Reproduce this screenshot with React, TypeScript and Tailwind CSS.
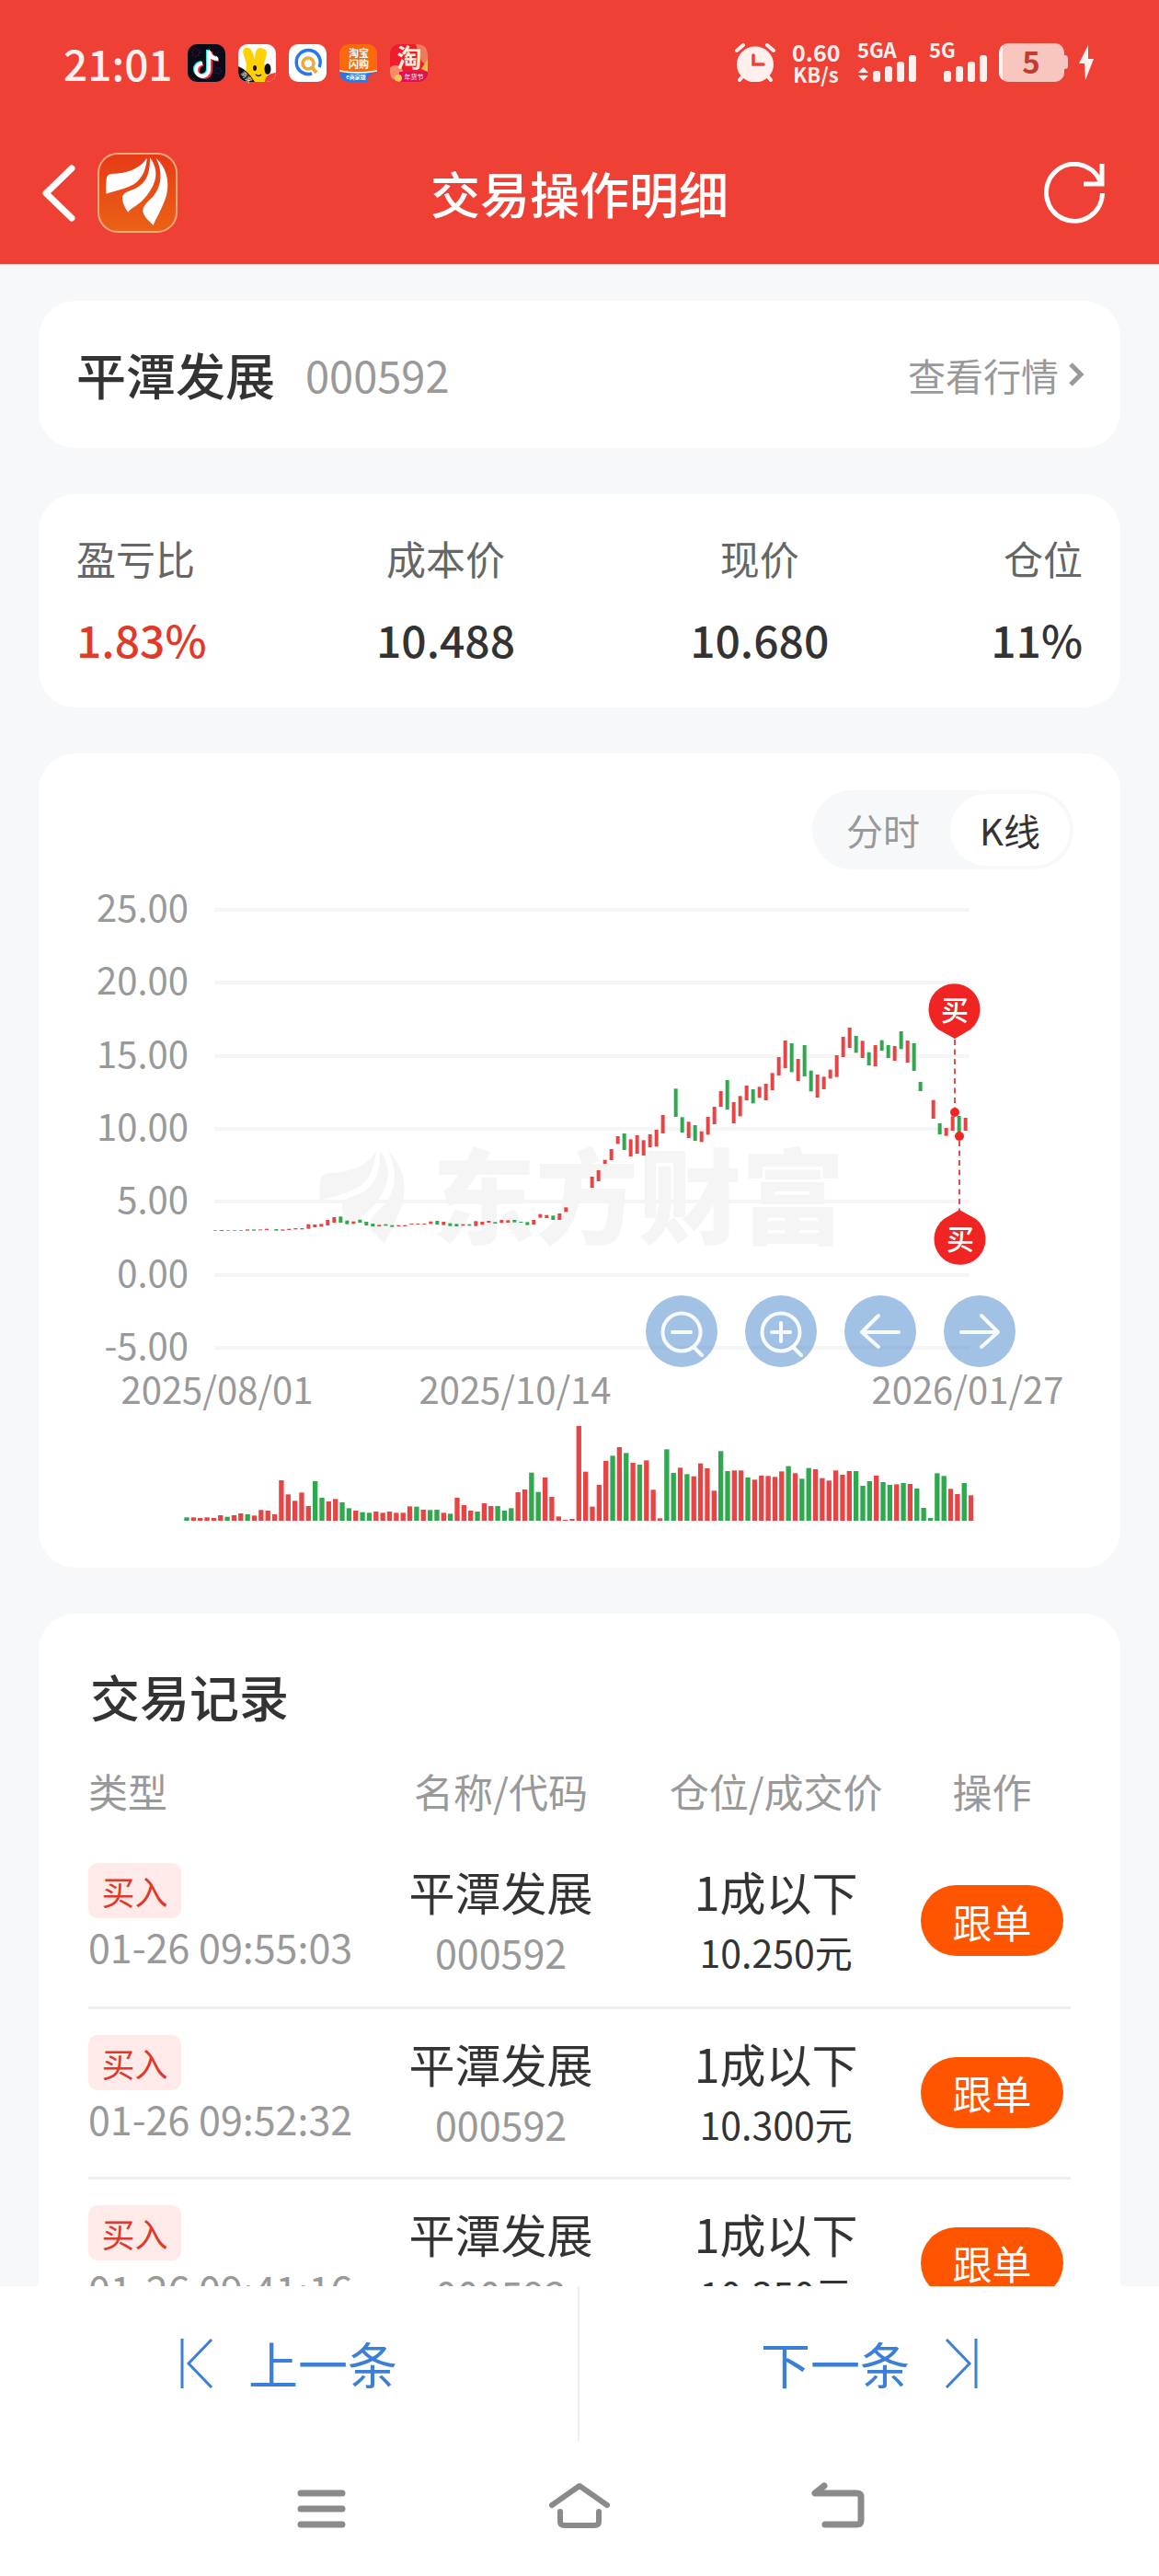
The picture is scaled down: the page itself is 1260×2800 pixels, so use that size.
import { useState } from "react";

const UP = "#e64545";
const DOWN = "#2fa84f";

const Y_TICKS = ["25.00", "20.00", "15.00", "10.00", "5.00", "0.00", "-5.00"];
const X_TICKS = [
  { x: 236, label: "2025/08/01" },
  { x: 560, label: "2025/10/14" },
  { x: 1052, label: "2026/01/27" },
];

type Candle = [x: number, top: number, bottom: number, color: "r" | "g"];

// Sub-pixel units: three units per drawing pixel.
const EARLY_CANDLES: Candle[] = [
  [102, 771, 773, "g"], [123, 771, 774, "r"], [144, 771, 773, "r"], [165, 771, 773, "r"], [186, 771, 773, "r"],
  [207, 769, 773, "r"], [228, 769, 773, "g"], [249, 769, 772, "r"], [270, 767, 771, "r"], [301, 768, 773, "g"],
  [322, 769, 773, "r"], [343, 767, 771, "r"], [364, 765, 769, "r"], [385, 765, 769, "r"], [406, 752, 767, "r"],
  [427, 753, 762, "r"], [448, 751, 760, "r"], [469, 738, 756, "r"], [490, 729, 747, "r"], [511, 727, 747, "g"],
  [532, 740, 752, "g"], [553, 743, 751, "r"], [574, 737, 747, "g"], [595, 744, 756, "g"], [616, 750, 759, "g"],
  [637, 754, 759, "r"], [658, 752, 757, "g"], [679, 755, 761, "g"], [700, 755, 759, "r"], [721, 755, 759, "r"],
  [742, 750, 753, "r"], [763, 750, 753, "r"], [784, 750, 753, "r"], [805, 743, 751, "r"], [826, 741, 753, "g"],
  [847, 744, 755, "r"], [868, 749, 758, "g"], [889, 751, 759, "g"], [910, 752, 757, "r"], [931, 752, 757, "g"],
  [952, 742, 758, "r"], [973, 744, 754, "r"], [994, 741, 747, "r"], [1015, 745, 750, "g"], [1036, 738, 748, "r"],
  [1057, 739, 747, "r"], [1078, 738, 746, "g"], [1099, 744, 747, "g"], [1120, 745, 755, "g"], [1141, 738, 753, "r"],
  [1162, 719, 731, "r"], [1183, 722, 732, "r"], [1204, 724, 738, "g"], [1225, 717, 738, "r"], [1246, 697, 712, "r"],
];

const LATE_CANDLES: Candle[] = [
  [71, 687, 723, "r"], [92, 666, 702, "r"], [113, 632, 645, "r"], [134, 597, 633, "r"], [155, 555, 580, "r"],
  [176, 546, 600, "g"], [197, 565, 621, "r"], [218, 552, 612, "r"], [239, 568, 618, "r"], [260, 549, 591, "r"],
  [281, 534, 589, "r"], [302, 486, 546, "r"], [344, 400, 492, "g"], [365, 493, 543, "g"], [386, 508, 561, "r"],
  [407, 519, 570, "g"], [428, 539, 574, "r"], [449, 492, 550, "r"], [470, 459, 516, "r"], [491, 408, 459, "r"],
  [512, 372, 468, "g"], [533, 444, 513, "r"], [554, 424, 490, "r"], [575, 390, 438, "r"], [596, 402, 448, "g"],
  [617, 394, 430, "r"], [638, 384, 438, "r"], [659, 349, 405, "r"], [680, 297, 357, "r"], [701, 243, 333, "r"],
  [722, 252, 346, "g"], [743, 303, 375, "r"], [764, 258, 360, "g"], [785, 341, 409, "g"], [806, 354, 429, "r"],
  [827, 361, 402, "r"], [848, 338, 367, "r"], [869, 291, 362, "r"], [890, 231, 297, "r"], [911, 201, 267, "r"],
  [932, 228, 283, "g"], [953, 244, 300, "r"], [974, 281, 324, "g"], [995, 258, 327, "r"], [1016, 242, 276, "g"],
  [1037, 258, 300, "g"], [1058, 261, 309, "r"], [1079, 213, 271, "g"], [1100, 243, 315, "r"], [1121, 252, 342, "g"],
  [1142, 378, 408, "g"], [1184, 437, 498, "r"], [1205, 513, 549, "g"], [1226, 528, 554, "r"], [1247, 490, 537, "r"],
  [1268, 489, 542, "g"], [1289, 495, 537, "r"],
];

const VOLUME =
  "388g 388r 390r 388r 390r 381r 386g 381r 375r 378g 382r 364r 366r 378r 267r 313r 334r 307r 351r 270g 324g 336r 328r 339g 358g 366r 371g 373g 369r 373r 369r 373r 373r 352r 353g 363r 364g 363g 373r 376g 324r 348r 366r 369g 342r 351r 351g 366g 358g 306r 297r 242g 305g 258r 321r 385r 396r 393r 90r 239r 353r 282r 204r 187g 159r 178g 210r 216g 202r 298r 391r 166g 243g 226r 247g 254r 212r 228r 301r 172g 237g 235r 235r 258g 265r 252r 253r 256r 238r 221g 244r 262g 227g 231r 260r 268r 235r 249r 237r 237g 285g 270g 252r 273g 282g 280r 276g 279r 294g 357g 390g 244g 253g 295r 312r 276g 316r"
    .split(" ")
    .map((bar) => ({ top: parseInt(bar, 10), color: bar.endsWith("r") ? UP : DOWN }));

const RECORDS = [
  { time: "01-26 09:55:03", name: "平潭发展", code: "000592", size: "1成以下", price: "10.250元" },
  { time: "01-26 09:52:32", name: "平潭发展", code: "000592", size: "1成以下", price: "10.300元" },
  { time: "01-26 09:41:16", name: "平潭发展", code: "000592", size: "1成以下", price: "10.350元" },
];

function Feathers() {
  return (
    <>
      <path d="M53.800 5.700 C46 18 32 22 16 23 C11 23.500 10 25 9.500 31 C9 36 9 40 9.600 44.700 C16 42 30 40 40 34 C50 27 53 16 53.800 5.700 Z" />
      <path d="M57 5 C57 22 54 33 40 39.500 C30 43 26.500 45 27 50 C27.500 56 30 60 33.300 64.700 C36 60 46 57 54 46 C66 30 66 18 57 5 Z" />
      <path d="M63.500 5.700 C72 22 69 38 60 48 C53 55 49 58 49.400 64 C50 69 55 73 60.700 79 C63 72 71 60 75 46 C79 30 74 15 63.500 5.700 Z" />
    </>
  );
}

function StatusBar() {
  return (
    <div className="flex h-[136px] items-center justify-between pr-[70px] pl-[69px] text-[#fff0ee]">
      <div className="flex items-center gap-[14px]">
        <span className="w-[121px] text-[46px] leading-[60px] font-medium">21:01</span>
        <svg className="size-[41px]" viewBox="0 0 41 41" aria-label="抖音">
          <rect width="41" height="41" rx="10" fill="#0b0b18" />
          <circle cx="9" cy="9" r="4" fill="none" stroke="#5a1230" strokeWidth="2" strokeDasharray="1 2" />
          <circle cx="33" cy="29" r="3" fill="none" stroke="#26265e" strokeWidth="2" strokeDasharray="1 2" />
          <g fill="none" strokeWidth="4">
            <path d="M22 6 V27 A7 7 0 1 1 15 20 M22 7 Q24 15 32 15" stroke="#25f4ee" />
            <path d="M25 8 V29 A7 7 0 1 1 17 22 M25 9 Q27 17 34 17" stroke="#fe2c55" />
            <path d="M23 7 V28 A7 7 0 1 1 16 21 M23 8 Q25 16 33 16" stroke="#fff" />
          </g>
        </svg>
        <svg className="size-[41px] overflow-visible" viewBox="0 0 41 41" aria-label="美团商家">
          <clipPath id="rabbit">
            <rect width="41" height="41" rx="10" />
          </clipPath>
          <g clipPath="url(#rabbit)">
            <rect width="41" height="41" fill="#fff" />
            <path d="M5 8 Q6 3 11 4 Q16 6 18 17 Q18 4 24 4 Q31 5 31 10 L28 21 Q34 32 30 41 H12 Q7 32 9 22 Z" fill="#ffd100" />
            <ellipse cx="18" cy="26" rx="2" ry="3" fill="#111" />
            <ellipse cx="32" cy="27" rx="3.500" ry="6" fill="#111" />
            <path d="M19 33 Q22 36 25 33" fill="none" stroke="#111" strokeWidth="1.500" />
            <path d="M0 24 Q10 28 18 41 H0 Z" fill="#111" />
            <path d="M41 31 Q29 32 29 41 H41 Z" fill="#ef4035" />
          </g>
          <text x="2" y="33" fontSize="7" fill="#fff" transform="rotate(48 3 33)">商家</text>
        </svg>
        <svg className="size-[41px]" viewBox="0 0 41 41" fill="none" aria-label="搜索">
          <rect width="41" height="41" rx="10" fill="#fff" />
          <path d="M33 25 A13 13 0 1 0 25 32" stroke="#2878ea" strokeWidth="3.500" />
          <circle cx="21" cy="21" r="6" stroke="#eda93a" strokeWidth="3.500" />
          <path d="M25 25 L30 31" stroke="#eda93a" strokeWidth="4" />
        </svg>
        <svg className="size-[41px] overflow-visible" viewBox="0 0 41 41" aria-label="淘宝闪购">
          <clipPath id="flash">
            <rect width="41" height="41" rx="10" />
          </clipPath>
          <g clipPath="url(#flash)">
            <rect width="41" height="41" fill="#fa6a0a" />
            <path d="M0 30 Q20 34 41 30 V41 H0 Z" fill="#2776ea" />
            <path d="M0 29 Q20 33 41 29" fill="none" stroke="#fff" strokeWidth="1.500" />
            <path d="M41 31 Q30 32 30 41 H41 Z" fill="#ef4035" />
          </g>
          <g fill="#fff" fontWeight="700" textAnchor="middle">
            <text x="21" y="14" fontSize="11">淘宝</text>
            <text x="21" y="26" fontSize="11">闪购</text>
            <text x="18" y="38" fontSize="6">e商家版</text>
          </g>
        </svg>
        <svg className="size-[41px] overflow-visible" viewBox="0 0 41 41" aria-label="淘宝">
          <clipPath id="taobao">
            <rect width="41" height="41" rx="10" />
          </clipPath>
          <g clipPath="url(#taobao)">
            <rect width="41" height="41" fill="#ee1c2c" />
            <path d="M28 0 L41 0 V26 L34 18 Z" fill="#f0785c" />
            <circle cx="6" cy="31" r="8" fill="#f58c68" />
            <path d="M34 27 L41 16 V30 Z" fill="#f7b64e" />
            <rect x="10" y="30" width="31" height="11" fill="#e01050" />
            <circle cx="9" cy="37" r="4" fill="#f7c64e" />
          </g>
          <text x="21" y="25" fontSize="27" fontWeight="700" fill="#fff0d8" textAnchor="middle">淘</text>
          <text x="26" y="38" fontSize="7" fill="#fff" textAnchor="middle">年货节</text>
        </svg>
      </div>
      <div className="flex items-center">
        <svg className="mr-[18px] h-[42px] w-[44px]" viewBox="0 0 44 42" aria-label="闹钟">
          <g stroke="currentColor" strokeWidth="4" strokeLinecap="round">
            <path d="M2 8 L9 2 M35 2 L42 8 M10 34 L5 40 M34 34 L39 40" />
          </g>
          <ellipse cx="22" cy="23" rx="20" ry="19.500" fill="currentColor" />
          <path d="M20 13 V23 H31" fill="none" stroke="#ee4035" strokeWidth="3.500" strokeLinecap="round" />
        </svg>
        <div className="mr-[19px] w-[52px] text-center text-[25px] leading-[24px] font-bold whitespace-nowrap">
          <div>0.60</div>
          <div className="text-[22px]">KB/s</div>
        </div>
        <svg className="mr-[14px] h-[42px] w-[64px] overflow-visible" viewBox="0 0 64 42" fill="currentColor" aria-label="5GA 信号">
          <text x="0" y="16" fontSize="22" fontWeight="700">5GA</text>
          <path d="M1 32 L6.500 26 L12 32 Z M1 35 L6.500 41 L12 35 Z" />
          <rect x="17" y="30" width="8" height="12" rx="3" />
          <rect x="30" y="25" width="8" height="17" rx="3" />
          <rect x="43" y="20" width="8" height="22" rx="3" />
          <rect x="56" y="13" width="8" height="29" rx="3" />
        </svg>
        <svg className="mr-[13px] h-[42px] w-[63px] overflow-visible" viewBox="0 0 63 42" fill="currentColor" aria-label="5G 信号">
          <text x="0" y="16" fontSize="22" fontWeight="700">5G</text>
          <rect x="16" y="30" width="8" height="12" rx="3" />
          <rect x="29" y="25" width="8" height="17" rx="3" />
          <rect x="42" y="20" width="8" height="22" rx="3" />
          <rect x="55" y="13" width="8" height="29" rx="3" />
        </svg>
        <svg className="mr-[11px] h-[42px] w-[75px] overflow-visible" viewBox="0 0 75 42" aria-label="电量 5">
          <clipPath id="cell">
            <rect width="71" height="42" rx="10" />
          </clipPath>
          <path d="M70 13 H72 Q75 13 75 17 V25 Q75 28 72 28 H70 Z" fill="#f9c5bf" />
          <g clipPath="url(#cell)">
            <rect width="71" height="42" fill="#f9c5bf" />
            <rect width="4" height="42" fill="#fff0ee" />
          </g>
          <text x="35" y="33" fontSize="33" fontWeight="700" fill="#c23a30" textAnchor="middle">5</text>
        </svg>
        <svg className="h-[38px] w-[18px]" viewBox="0 0 18 38" fill="currentColor" aria-label="充电中">
          <path d="M11 0 L1 20 H7 L8 38 L17 15 H11 Z" />
        </svg>
      </div>
    </div>
  );
}

function Header() {
  return (
    <header className="shrink-0 bg-[#ee4035] text-white">
      <StatusBar />
      <div className="grid h-[151px] grid-cols-[1fr_auto_1fr] items-center px-[45px] pb-1">
        <div className="flex items-center gap-[24px]">
          <button type="button" aria-label="返回">
            <svg className="h-[62px] w-[37px]" viewBox="0 0 37 62" fill="none" stroke="currentColor" strokeWidth="7" strokeLinecap="round" strokeLinejoin="round">
              <path d="M33 4 L5 31 L33 58" />
            </svg>
          </button>
          <svg className="size-[87px]" viewBox="0 0 87 87" aria-label="东方财富">
            <defs>
              <linearGradient id="logo-bg" x1="0" y1="0" x2="0" y2="1">
                <stop offset="0" stopColor="#e63a16" />
                <stop offset="1" stopColor="#ea6316" />
              </linearGradient>
            </defs>
            <rect x="1" y="1" width="85" height="85" rx="21" fill="url(#logo-bg)" stroke="#f8a97c" strokeWidth="2" />
            <g fill="#fff">
              <Feathers />
            </g>
          </svg>
        </div>
        <h1 className="text-[54px] leading-[64px] font-medium">交易操作明细</h1>
        <button type="button" aria-label="刷新" className="mr-[13px] justify-self-end">
          <svg className="h-[68px] w-[67px]" viewBox="0 0 67 68" fill="none" stroke="currentColor" strokeWidth="5">
            <path d="M63.500 34 A30.500 31 0 1 1 61 21" />
            <path d="M43 24 H63 V2" strokeWidth="5" />
          </svg>
        </button>
      </div>
    </header>
  );
}

function Stat({ label, value, className = "" }: { label: string; value: string; className?: string }) {
  return (
    <div className={className}>
      <dt className="text-[43px] leading-[60px] text-[#666]">{label}</dt>
      <dd className="mt-[28px] text-[48px] leading-[60px] font-medium">{value}</dd>
    </div>
  );
}

function Candles({ items }: { items: Candle[] }) {
  return items.map(([x, top, bottom, color]) => (
    <rect key={x} x={x - 6} y={top} width="12" height={bottom - top} fill={color === "r" ? UP : DOWN} />
  ));
}

function Chart() {
  return (
    <svg className="block h-auto w-full" viewBox="42 945 1176 759" role="img" aria-label="平潭发展K线图">
      <g fill="#f5f5f5">
        <g transform="translate(335 1244) scale(1.37)">
          <Feathers />
        </g>
        <text x="470" y="1344" fontSize="112" fontWeight="900">东方财富</text>
      </g>
      {Y_TICKS.map((label, i) => {
        const y = Math.round(989 + (i * 476) / 6);
        return (
          <g key={label}>
            <rect x="233" y={y - 2} width="821" height="4" fill="#f5f5f5" />
            <text x="205" y={y + 13} fontSize="40" fill="#999" textAnchor="end">{label}</text>
          </g>
        );
      })}
      {X_TICKS.map(({ x, label }) => (
        <text key={label} x={x} y="1526" fontSize="40" fill="#999" textAnchor="middle">{label}</text>
      ))}
      <g transform="translate(200 1080) scale(0.33333)">
        <Candles items={EARLY_CANDLES} />
      </g>
      <g transform="translate(620 1050) scale(0.33333)">
        <Candles items={LATE_CANDLES} />
      </g>
      <g transform="translate(180 1520) scale(0.33333)">
        {VOLUME.map(({ top, color }, i) => (
          <rect key={i} x={61 + i * 22.05} y={top} width="16" height={399 - top} fill={color} />
        ))}
      </g>
      <g stroke="#e05050" strokeWidth="2" strokeDasharray="6 4.500">
        <path d="M1038 1130 V1204" />
        <path d="M1043 1240 V1316" />
      </g>
      <g fill="#f12424">
        <circle cx="1038" cy="1209" r="5" />
        <circle cx="1043" cy="1235" r="5" />
        <path d="M1038 1129 L1020 1119 A28 28 0 1 1 1055 1119 Z" />
        <path d="M1043 1315 L1026 1325 A28 28 0 1 0 1061 1325 Z" />
      </g>
      <g fill="#fff" fontSize="30" fontWeight="500" textAnchor="middle">
        <text x="1038" y="1109">买</text>
        <text x="1044" y="1358">买</text>
      </g>
    </svg>
  );
}

const LENS = "M18.500 40 a20.500 20.500 0 1 0 41 0 a20.500 20.500 0 1 0 -41 0 M52 56 L61 65";

const CHART_BUTTONS = [
  { label: "缩小", path: `${LENS} M29 40 H49` },
  { label: "放大", path: `${LENS} M29 40 H49 M39 30 V50` },
  { label: "向左", path: "M59 40 H19 M37 22 L19 40 L37 56" },
  { label: "向右", path: "M19 40 H59 M41 22 L59 40 L41 56" },
];

function ChartCard() {
  const [mode, setMode] = useState("K线");
  return (
    <section className="relative rounded-[40px] bg-white pt-10">
      <div className="mr-[51px] ml-auto flex h-[86px] w-[284px] items-center rounded-full bg-[#f7f8fa] p-1">
        {["分时", "K线"].map((item) => (
          <button
            key={item}
            type="button"
            aria-pressed={mode === item}
            onClick={() => setMode(item)}
            className={
              mode === item
                ? "h-[78px] w-[130px] rounded-full bg-white text-[40px] leading-[60px] text-[#333]"
                : "h-[78px] flex-1 rounded-full text-[40px] leading-[60px] text-[#999]"
            }
          >
            {item}
          </button>
        ))}
      </div>
      <Chart />
      <div className="absolute right-[114px] bottom-[218px] flex gap-[30px]">
        {CHART_BUTTONS.map(({ label, path }) => (
          <button key={label} type="button" aria-label={label} className="rounded-full bg-[#4686cb]/50">
            <svg className="size-[78px]" viewBox="0 0 78 78" fill="none" stroke="#f7fbff" strokeWidth="4" strokeLinecap="round" strokeLinejoin="round">
              <path d={path} />
            </svg>
          </button>
        ))}
      </div>
    </section>
  );
}

function Records() {
  return (
    <section className="rounded-[40px] bg-white px-[54px] pt-[56px] pb-10">
      <h2 className="pl-[2px] text-[54px] leading-[68px] font-medium">交易记录</h2>
      <table className="mt-[17px] w-full table-fixed text-center">
        <thead>
          <tr className="h-[102px] text-[43px] leading-[60px] text-[#999]">
            <th className="w-[28%] text-left font-normal">类型</th>
            <th className="w-[28%] font-normal">名称/代码</th>
            <th className="w-[28%] font-normal whitespace-nowrap">仓位/成交价</th>
            <th className="font-normal">操作</th>
          </tr>
        </thead>
        <tbody>
          {RECORDS.map((r) => (
            <tr key={r.time} className="h-[185px] border-b-3 border-[#eee] align-top">
              <td className="pt-7 text-left">
                <span className="block w-[101px] rounded-[10px] bg-[#ffeaea] text-center text-[36px] leading-[60px] text-[#e0392b]">买入</span>
                <span className="block text-[43px] leading-[60px] whitespace-nowrap text-[#999]">{r.time}</span>
              </td>
              <td className="pt-7">
                <span className="block text-[50px] leading-[60px]">{r.name}</span>
                <span className="mt-[6px] block text-[43px] leading-[60px] text-[#999]">{r.code}</span>
              </td>
              <td className="pt-7">
                <span className="block text-[50px] leading-[60px]">{r.size}</span>
                <span className="mt-[6px] block text-[41px] leading-[60px]">{r.price}</span>
              </td>
              <td className="pt-[52px]">
                <button type="button" className="h-[77px] w-[155px] rounded-full bg-[#ff5500] text-[43px] leading-[60px] text-white">跟单</button>
              </td>
            </tr>
          ))}
        </tbody>
      </table>
    </section>
  );
}

function BottomBar() {
  return (
    <footer className="shrink-0 bg-white">
      <nav className="grid h-[168px] grid-cols-2 text-[54px] leading-[64px] text-[#3b80d6]">
        <button type="button" className="flex items-center justify-center gap-[38px] border-r-2 border-[#eee]">
          <svg className="h-[54px] w-[36px]" viewBox="0 0 36 54" fill="none" stroke="currentColor" strokeWidth="3">
            <path d="M2 0 V54 M34 1 L9 27 L34 53" />
          </svg>
          上一条
        </button>
        <button type="button" className="flex items-center justify-center gap-[38px]">
          下一条
          <svg className="h-[54px] w-[36px]" viewBox="0 0 36 54" fill="none" stroke="currentColor" strokeWidth="3">
            <path d="M34 0 V54 M2 1 L27 27 L2 53" />
          </svg>
        </button>
      </nav>
      <div className="flex h-[147px] items-center justify-center gap-[214px] pb-[8px] text-[#8a8a8a]">
        <button type="button" aria-label="菜单">
          <svg className="h-[50px] w-[66px]" viewBox="0 0 66 50" stroke="currentColor" strokeWidth="7" strokeLinecap="round">
            <path d="M10 12 H55 M10 29 H55 M10 46 H55" />
          </svg>
        </button>
        <button type="button" aria-label="主页">
          <svg className="h-[50px] w-[66px]" viewBox="0 0 66 50" fill="none" stroke="currentColor" strokeWidth="6" strokeLinecap="round" strokeLinejoin="round">
            <path d="M3 25 L33 4 L63 25" />
            <path d="M12 32 V43 Q12 47 17 47 H49 Q54 47 54 43 V32" />
          </svg>
        </button>
        <button type="button" aria-label="返回上一页">
          <svg className="h-[50px] w-[66px]" viewBox="0 0 66 50" fill="none" stroke="currentColor" strokeWidth="7" strokeLinecap="round" strokeLinejoin="round">
            <path d="M19 4 L9 12 H54 Q59 12 59 16 V42 Q59 46 54 46 H20" />
          </svg>
        </button>
      </div>
    </footer>
  );
}

export default function App() {
  return (
    <div className="flex h-screen flex-col bg-[#f7f8fa] font-['Noto_Sans_CJK_SC',sans-serif] text-[#333]">
      <Header />
      <main className="flex min-h-0 flex-1 flex-col gap-[50px] overflow-y-auto px-[42px] pt-[40px] [scrollbar-width:none] *:shrink-0">
        <section className="flex h-[160px] items-center justify-between rounded-[40px] bg-white pr-[39px] pl-[41px]">
          <div className="flex items-center gap-[33px]">
            <h2 className="text-[54px] leading-[64px] font-medium">平潭发展</h2>
            <span className="text-[47px] leading-[64px] text-[#999]">000592</span>
          </div>
          <a href="#quote" className="flex items-center gap-[10px] text-[41px] leading-[60px] text-[#999]">
            查看行情
            <svg className="h-[28px] w-[18px]" viewBox="0 0 18 28" fill="none" stroke="currentColor" strokeWidth="5">
              <path d="M3 3 L14 14 L3 25" />
            </svg>
          </a>
        </section>
        <dl className="grid grid-cols-[23fr_34fr_34fr_18fr] rounded-[40px] bg-white px-[41px] pt-[39px] pb-[45px] text-center">
          <Stat label="盈亏比" value="1.83%" className="text-left [&_dd]:text-[#e23a2a]" />
          <Stat label="成本价" value="10.488" />
          <Stat label="现价" value="10.680" />
          <Stat label="仓位" value="11%" className="text-right" />
        </dl>
        <ChartCard />
        <Records />
      </main>
      <BottomBar />
    </div>
  );
}
